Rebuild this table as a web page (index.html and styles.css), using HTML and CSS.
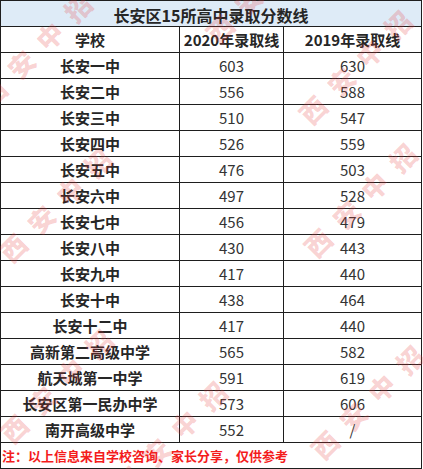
FILE: index.html
```html
<!DOCTYPE html>
<html lang="zh-CN">
<head>
<meta charset="utf-8">
<title>长安区15所高中录取分数线</title>
<link rel="stylesheet" href="styles.css">
</head>
<body>
<div class="sheet">
  <div class="grid">
    <div class="cell title">长安区15所高中录取分数线</div>
    <div class="cell head">学校</div>
    <div class="cell head">2020年录取线</div>
    <div class="cell head">2019年录取线</div>

    <div class="cell name">长安一中</div><div class="cell num">603</div><div class="cell num">630</div>
    <div class="cell name">长安二中</div><div class="cell num">556</div><div class="cell num">588</div>
    <div class="cell name">长安三中</div><div class="cell num">510</div><div class="cell num">547</div>
    <div class="cell name">长安四中</div><div class="cell num">526</div><div class="cell num">559</div>
    <div class="cell name">长安五中</div><div class="cell num">476</div><div class="cell num">503</div>
    <div class="cell name">长安六中</div><div class="cell num">497</div><div class="cell num">528</div>
    <div class="cell name">长安七中</div><div class="cell num">456</div><div class="cell num">479</div>
    <div class="cell name">长安八中</div><div class="cell num">430</div><div class="cell num">443</div>
    <div class="cell name">长安九中</div><div class="cell num">417</div><div class="cell num">440</div>
    <div class="cell name">长安十中</div><div class="cell num">438</div><div class="cell num">464</div>
    <div class="cell name">长安十二中</div><div class="cell num">417</div><div class="cell num">440</div>
    <div class="cell name">高新第二高级中学</div><div class="cell num">565</div><div class="cell num">582</div>
    <div class="cell name">航天城第一中学</div><div class="cell num">591</div><div class="cell num">619</div>
    <div class="cell name">长安区第一民办中学</div><div class="cell num">573</div><div class="cell num">606</div>
    <div class="cell name">南开高级中学</div><div class="cell num">552</div><div class="cell num">/</div>

    <div class="cell note">注：以上信息来自学校咨询、家长分享，仅供参考</div>
  </div>

  <div class="wm" style="left:-38px;top:37px">西安中招</div>
  <div class="wm" style="left:-18px;top:192px">西安中招</div>
  <div class="wm" style="left:-17px;top:373px">西安中招</div>
  <div class="wm" style="left:97px;top:425px">西安中招</div>
  <div class="wm" style="left:294px;top:389px">西安中招</div>
  <div class="wm" style="left:287px;top:187px">西安中招</div>
  <div class="wm" style="left:282px;top:54px">西安中招</div>
  <div class="wm" style="left:189px;top:-27px">西安中招</div>
</div>
</body>
</html>
```

FILE: styles.css
```css
* { box-sizing: border-box; }
html, body { margin: 0; padding: 0; background: #fff; }
body { font-family: "Noto Sans CJK SC", "Microsoft YaHei", sans-serif; }

.sheet {
  position: relative;
  width: 423px;
  height: 469px;
  overflow: hidden;
}

.grid {
  display: grid;
  grid-template-columns: 179px 104px 138px;
  grid-auto-rows: 26px;
  width: 422px;
  border-top: 1px solid #1e1e1e;
  border-left: 1px solid #1e1e1e;
}

.cell {
  border-right: 1px solid #1e1e1e;
  border-bottom: 1px solid #1e1e1e;
  display: flex;
  align-items: center;
  justify-content: center;
  font-size: 15px;
  line-height: 1;
  color: #262626;
  white-space: nowrap;
}

.title {
  grid-column: 1 / 4;
  background: #deebf7;
  font-size: 16px;
  font-weight: 700;
  padding-top: 2px;
}

.head { font-weight: 700; }
.name { font-weight: 700; }
.num { color: #333; font-weight: 400; }

.note {
  grid-column: 1 / 4;
  justify-content: flex-start;
  padding-left: 1px;
  color: #f41c1c;
  font-size: 13px;
  font-weight: 700;
}

.wm {
  position: absolute;
  transform: rotate(-45deg);
  transform-origin: 73px 13px;
  font-size: 26px;
  line-height: 26px;
  font-weight: 900;
  letter-spacing: 14px;
  color: rgba(232, 60, 60, 0.24);
  white-space: nowrap;
  pointer-events: none;
}
```
